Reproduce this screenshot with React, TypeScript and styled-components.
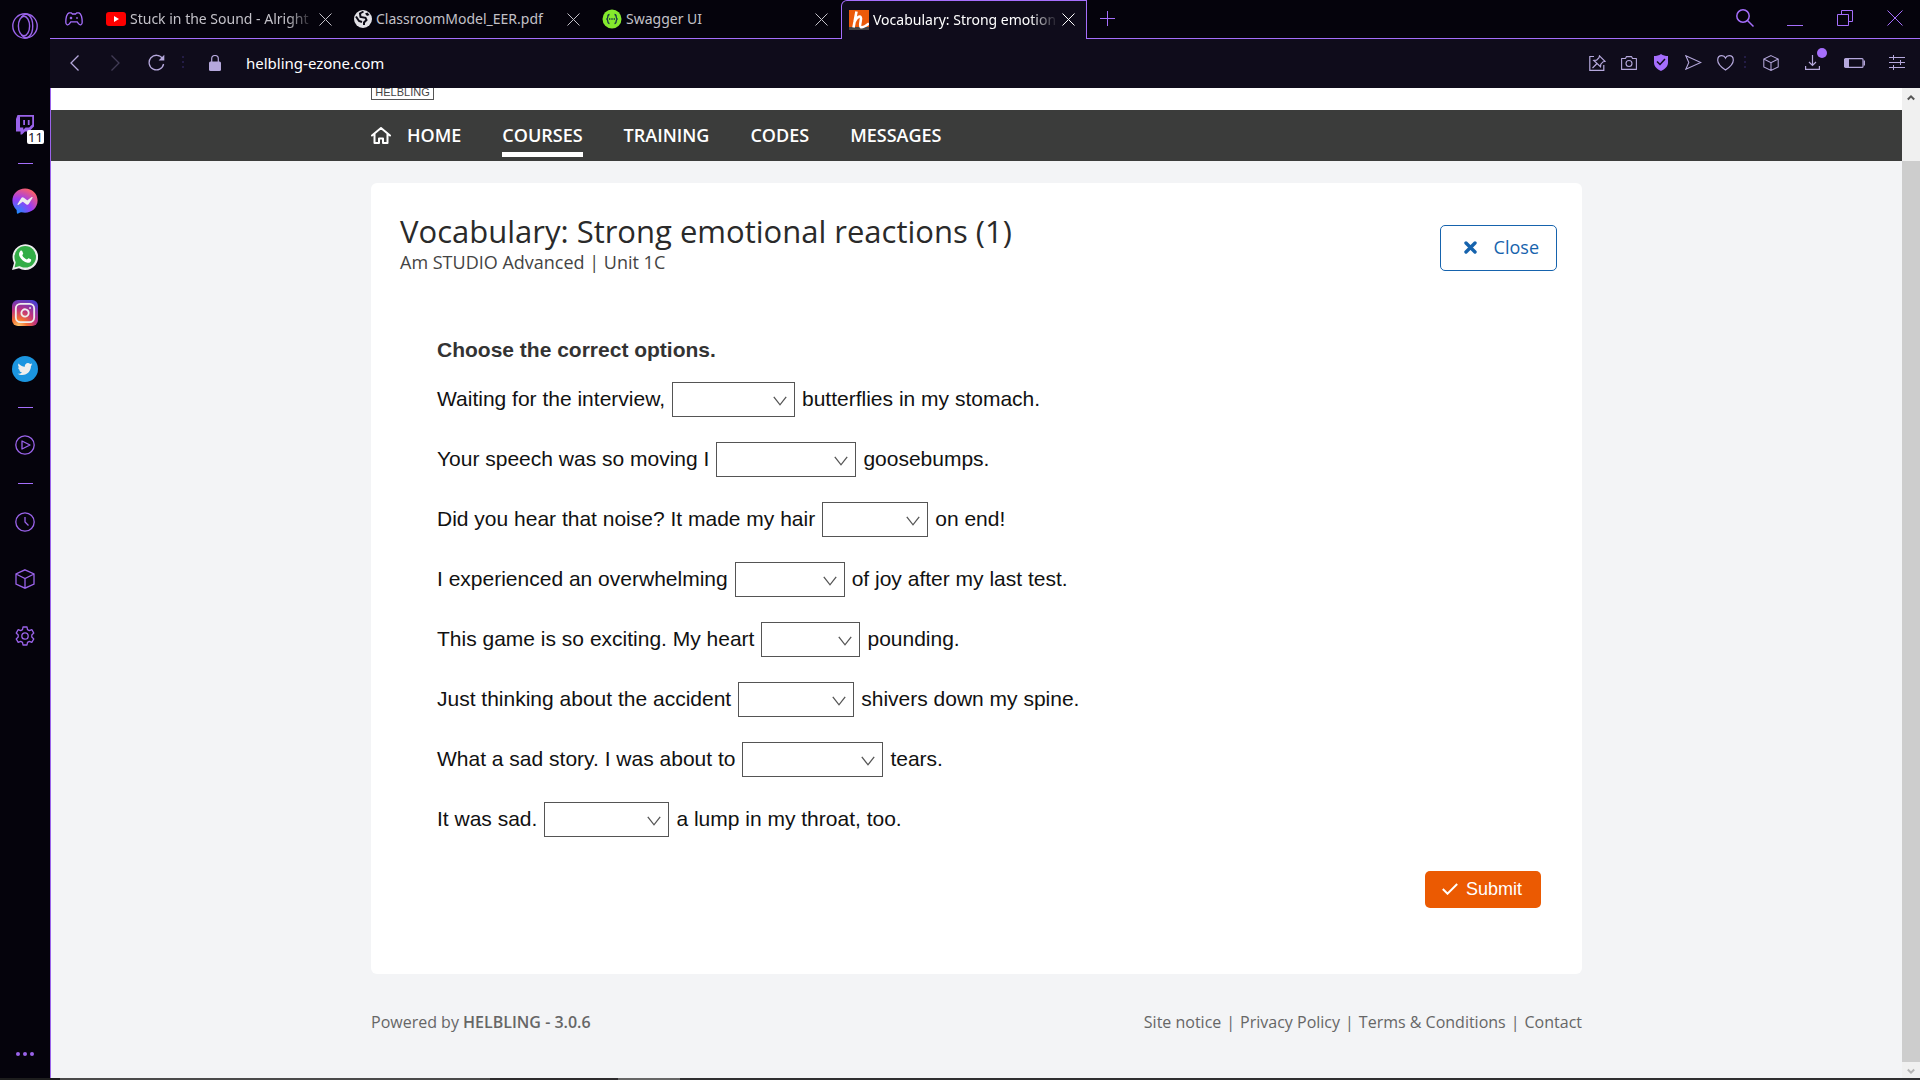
import React from "react";
import styled, { createGlobalStyle, css } from "styled-components";
import { FaFacebookMessenger, FaTwitter } from "react-icons/fa";
import { FiInstagram } from "react-icons/fi";

const colors = {
  chrome: "#05030c",
  toolbar: "#0f0c1b",
  accent: "#a56efc",
  accentDim: "#9a63ea",
  tool: "#b5a8dc",
  nav: "#3b3c3b",
  page: "#f3f4f6",
  blue: "#1663ad",
  orange: "#eb5a02",
};

const uiFont = `"Noto Sans", "Open Sans", sans-serif`;
const siteFont = `"Open Sans", "Noto Sans", sans-serif`;
const exerciseFont = `"Liberation Sans", Arial, sans-serif`;

const GlobalStyle = createGlobalStyle`
  *, *::before, *::after { box-sizing: border-box; }
  body { margin: 0; background: ${colors.chrome}; font-family: ${siteFont}; }
  button { margin: 0; padding: 0; border: 0; background: none; font: inherit; color: inherit; cursor: pointer; }
  a { color: inherit; text-decoration: none; }
  svg { display: block; flex: none; }
  h1, h2, p, ul { margin: 0; padding: 0; font-weight: inherit; }
`;

const Window = styled.div`
  display: flex;
  flex-direction: column;
  height: 100vh;
  overflow: hidden;
`;

const Browser = styled.div`
  display: flex;
  flex: 1;
  min-height: 0;
`;

const Sidebar = styled.nav`
  display: flex;
  flex-direction: column;
  flex: none;
  width: 50px;
  background: ${colors.chrome};
  color: ${colors.accentDim};
`;

const SideButton = styled.button<{ $height?: number }>`
  display: flex;
  align-items: center;
  justify-content: center;
  position: relative;
  height: ${(p) => p.$height ?? 56}px;
`;

const SideGap = styled.div`
  height: 46px;
`;

const SideDivider = styled.div`
  display: flex;
  align-items: center;
  justify-content: center;
  height: 20px;
  &::before {
    content: "";
    width: 15px;
    height: 1px;
    background: ${colors.accent};
  }
`;

const SideSpacer = styled.div`
  flex: 1;
`;

const CountBadge = styled.span`
  position: absolute;
  left: 27px;
  top: 33px;
  width: 17px;
  height: 14px;
  border-radius: 2px;
  background: #fff;
  color: #14101f;
  font: 13px/14px ${uiFont};
  text-align: center;
`;

const Main = styled.div`
  display: flex;
  flex-direction: column;
  flex: 1;
  min-width: 0;
`;

const TabStrip = styled.div`
  display: flex;
  height: 39px;
  background: ${colors.chrome};
  color: ${colors.accent};
`;

const StripLine = css`
  border-bottom: 1px solid ${colors.accent};
`;

const GxCorner = styled.button`
  ${StripLine}
  width: 47px;
  display: flex;
  align-items: center;
  justify-content: center;
`;

const Tab = styled.div<{ $active?: boolean }>`
  display: flex;
  align-items: center;
  gap: 4px;
  ${(p) =>
    p.$active
      ? css`
          width: 246px;
          padding: 0 11px 1px 7px;
          border: 1px solid ${colors.accent};
          border-bottom: 0;
          border-radius: 6px 0 0 0;
          background: ${colors.toolbar};
          color: #fff;
        `
      : css`
          ${StripLine}
          width: 248px;
          padding: 0 13px 0 9px;
          color: #c3c1c8;
        `}
`;

const TabTitle = styled.span<{ $fade?: boolean }>`
  flex: 1;
  min-width: 0;
  overflow: hidden;
  white-space: nowrap;
  font: 14px/20px ${uiFont};
  ${(p) =>
    p.$fade &&
    css`
      mask-image: linear-gradient(to right, #000 85%, transparent);
    `}
`;

const TabClose = styled.button`
  display: flex;
  align-items: center;
  justify-content: center;
  width: 13px;
  height: 13px;
`;

const StripRest = styled.div`
  ${StripLine}
  display: flex;
  align-items: center;
  flex: 1;
  padding: 0 16px 2px 11px;
`;

const WindowControls = styled.div`
  display: flex;
  align-items: center;
  gap: 32px;
  margin-left: auto;
`;

const Toolbar = styled.div`
  display: flex;
  align-items: center;
  height: 49px;
  padding: 0 14px 2px 15px;
  background: ${colors.toolbar};
  color: ${colors.tool};
`;

const ToolGroup = styled.div<{ $gap: number }>`
  display: flex;
  align-items: center;
  gap: ${(p) => p.$gap}px;
`;

const ToolButton = styled.button<{ $dim?: boolean }>`
  display: flex;
  align-items: center;
  justify-content: center;
  min-width: 18px;
  height: 18px;
  position: relative;
  opacity: ${(p) => (p.$dim ? 0.3 : 1)};
`;

const Dots = styled.span<{ $before: number; $after: number }>`
  width: 2px;
  height: 14px;
  margin: 0 ${(p) => p.$after}px 0 ${(p) => p.$before}px;
  background: repeating-linear-gradient(#231c46 0 2px, transparent 2px 5px);
`;

const AddressInput = styled.input`
  flex: 1;
  min-width: 0;
  margin-left: 22px;
  padding: 0;
  border: 0;
  outline: 0;
  background: transparent;
  color: #fff;
  font: 15px/20px ${uiFont};
`;

const DownloadDot = styled.span`
  position: absolute;
  top: -6px;
  right: -6px;
  width: 10px;
  height: 10px;
  border-radius: 50%;
  background: ${colors.accent};
`;

const ViewportFrame = styled.div`
  display: flex;
  flex: 1;
  min-height: 0;
  border-left: 1px solid ${colors.accentDim};
`;

const Page = styled.div`
  flex: 1;
  min-width: 0;
  overflow: hidden;
  background: ${colors.page};
`;

const Scrollbar = styled.div`
  display: flex;
  flex-direction: column;
  align-items: center;
  width: 18px;
  background: #f0f0f0;
`;

const ScrollArrow = styled.div<{ $height: number; $end?: boolean }>`
  display: flex;
  justify-content: center;
  padding-top: 6px;
  height: ${(p) => p.$height}px;
  color: ${(p) => (p.$end ? "#b4b4b4" : "#555")};
`;

const ScrollThumb = styled.div`
  flex: 1;
  width: 100%;
  background: #cdcdcd;
`;

const Container = styled.div`
  width: 100%;
  max-width: 1211px;
  margin: 0 auto;
`;

const LogoBar = styled.header`
  height: 22px;
  overflow: hidden;
  background: #fff;
`;

const LogoRow = styled(Container)`
  display: flex;
  align-items: flex-end;
  height: 100%;
  padding-bottom: 10px;
`;

const Logo = styled.a`
  flex: none;
  width: 63px;
  height: 40px;
  padding-top: 25px;
  border: 1px solid #555;
  color: #444;
  font: 11px/12px ${exerciseFont};
  text-align: center;
`;

const NavBar = styled.nav`
  background: ${colors.nav};
`;

const NavRow = styled(Container)`
  display: flex;
  gap: 41px;
  height: 51px;
`;

const NavLink = styled.a<{ $active?: boolean }>`
  display: flex;
  align-items: center;
  gap: 16px;
  height: 47px;
  padding-top: 8px;
  border-bottom: 5px solid ${(p) => (p.$active ? "#fff" : "transparent")};
  color: #fff;
  font: 600 18px/24px ${siteFont};
`;

const Card = styled.main`
  margin-top: 22px;
  padding: 30px 25px 66px 29px;
  border-radius: 6px;
  background: #fff;
`;

const CardHeader = styled.div`
  display: flex;
  justify-content: space-between;
  align-items: flex-start;
`;

const Title = styled.h1`
  color: #2a2a2a;
  font: 400 31px/36px ${siteFont};
`;

const Subtitle = styled.p`
  color: #444;
  font: 400 18px/26px ${siteFont};
`;

const CloseButton = styled.button`
  display: flex;
  align-items: center;
  gap: 17px;
  height: 46px;
  margin-top: 12px;
  padding: 0 17px 2px 23px;
  border: 1px solid ${colors.blue};
  border-radius: 5px;
  color: ${colors.blue};
  font: 500 18px/24px ${siteFont};
`;

const Exercise = styled.form`
  padding: 63px 16px 0 37px;
  font-family: ${exerciseFont};
`;

const Instruction = styled.h2`
  padding-bottom: 7px;
  color: #333;
  font: bold 21px/24px ${exerciseFont};
`;

const Sentence = styled.label`
  display: flex;
  align-items: center;
  gap: 7px;
  min-height: 60px;
  color: #111;
  font-size: 21px;
  line-height: 24px;
`;

const GapField = styled.span`
  display: grid;
  align-items: center;
`;

const GapSelect = styled.select<{ $width: number }>`
  grid-area: 1 / 1;
  appearance: none;
  width: ${(p) => p.$width}px;
  height: 35px;
  margin: 0;
  border: 1px solid #555;
  border-radius: 0;
  background: #fff;
  font: 21px ${exerciseFont};
`;

const GapChevron = styled.svg`
  grid-area: 1 / 1;
  justify-self: end;
  margin: 3px 8px 0 0;
  pointer-events: none;
`;

const Actions = styled.div`
  display: flex;
  justify-content: flex-end;
  padding-top: 22px;
`;

const SubmitButton = styled.button`
  display: flex;
  align-items: center;
  gap: 8px;
  height: 37px;
  padding: 0 19px 2px 17px;
  border-radius: 5px;
  background: ${colors.orange};
  color: #fff;
  font: 18px/24px ${exerciseFont};
`;

const Footer = styled.footer`
  display: flex;
  justify-content: space-between;
  padding-top: 36px;
  color: #666;
  font: 16px/24px ${siteFont};

  strong {
    font-weight: 600;
  }
`;

const FooterLinks = styled.div`
  display: flex;
  gap: 5px;
`;

const Taskbar = styled.div`
  height: 2px;
  background: linear-gradient(to right, #1d1d1d 60px, #4a4a4a 60px 490px, #2d2b2d 490px 618px, #666 618px 680px, #2f2f31 680px);
`;

const Cross = ({ size, width = 1 }: { size: number; width?: number }) => (
  <svg width={size} height={size} viewBox={`0 0 ${size} ${size}`} fill="none" stroke="currentColor" strokeWidth={width}>
    <path d={`M.5.5 ${size - 0.5} ${size - 0.5}M${size - 0.5}.5.5 ${size - 0.5}`} />
  </svg>
);

const Cube = ({ size }: { size: number }) => (
  <svg width={size} height={size} viewBox="0 0 20 20" fill="none" stroke="currentColor" strokeWidth="1.3">
    <path d="M10 .8 19 5v10l-9 4.2L1 15V5zM1 5l9 4.6L19 5M10 9.6v9.6" />
  </svg>
);

const OperaMark = () => (
  <svg width="26" height="26" viewBox="0 0 26 26" fill="none" stroke="currentColor" strokeWidth="1.4">
    <ellipse cx="13" cy="13" rx="12.2" ry="12.2" />
    <ellipse cx="12" cy="13" rx="5.6" ry="9.8" />
    <path d="M9.5 4C12 1 15 .8 17 2.400c5 4 5 17.200 0 21.200-2 1.600-5 1.400-7.500-1.600" />
  </svg>
);

const Twitch = () => (
  <svg width="18" height="20" viewBox="0 0 18 20">
    <path fill="currentColor" fillRule="evenodd" d="M1.5 0H18v11.5L13 16.5H9L6 19.5H4.5v-3H0V4zM4 1.8v10.7h3.3v2.2l2.2-2.2h3.6l3.1-3.1V1.8z" />
    <path fill="currentColor" d="M7.2 5H9v5H7.2zM11.8 5h1.8v5h-1.8z" />
  </svg>
);

const Messenger = () => (
  <svg width="26" height="26" viewBox="0 0 26 26">
    <defs>
      <radialGradient id="msg" gradientUnits="userSpaceOnUse" cx="100" cy="512" r="540">
        <stop offset="0" stopColor="#1292ff" />
        <stop offset=".55" stopColor="#9a3cf5" />
        <stop offset="1" stopColor="#fb5f6c" />
      </radialGradient>
    </defs>
    <circle cx="13" cy="12.5" r="9" fill="#eee" />
    <FaFacebookMessenger x="0" y="0" size={26} fill="url(#msg)" />
  </svg>
);

const WhatsApp = () => (
  <svg width="26" height="26" viewBox="0 0 26 26">
    <path d="M0 26 2 19A12.8 12.8 0 1 1 7 24.2z" fill="#eee" />
    <circle cx="13.2" cy="12.8" r="10.8" fill="#33ad46" />
    <path d="M2.5 23.5 4 17l4 5z" fill="#33ad46" />
    <path d="M8.3 7c.8-.8 1.7-.5 2 .2l.9 2.2c.2.5-.9 1.5-.9 1.9.8 2 2.600 3.500 4.500 4.200.5.1 1.300-1.500 1.800-1.300l2.300 1.100c.6.4.3 2.200-.8 2.900-1.200.8-2.700.8-5.400-.5-2.800-1.400-5-4.300-5.500-6.200-.4-1.800.2-3.500 1.100-4.500z" fill="#fff" />
  </svg>
);

const Instagram = () => (
  <svg width="26" height="26" viewBox="0 0 26 26">
    <defs>
      <radialGradient id="insta" cx=".25" cy="1.05" r="1.15">
        <stop offset="0" stopColor="#fed576" />
        <stop offset=".28" stopColor="#f47133" />
        <stop offset=".6" stopColor="#bc3081" />
        <stop offset="1" stopColor="#4c3fcf" />
      </radialGradient>
    </defs>
    <rect width="26" height="26" rx="6" fill="url(#insta)" />
    <FiInstagram x="2" y="2" size={22} color="#eee" />
  </svg>
);

const Twitter = () => (
  <svg width="26" height="26" viewBox="0 0 26 26">
    <circle cx="13" cy="13" r="13" fill="#1b95e0" />
    <FaTwitter x="5.5" y="5.5" size={15} color="#eee" />
  </svg>
);

const Play = () => (
  <svg width="20" height="20" viewBox="0 0 20 20" fill="none" stroke="currentColor" strokeWidth="1.3">
    <circle cx="10" cy="10" r="9.2" />
    <path d="M7 6v8l8-4z" strokeLinejoin="round" />
  </svg>
);

const Clock = () => (
  <svg width="20" height="20" viewBox="0 0 20 20" fill="none" stroke="currentColor" strokeWidth="1.3">
    <circle cx="10" cy="10" r="9.2" />
    <path d="M10 5v5l3.5 3.5" />
  </svg>
);

const Gear = () => (
  <svg width="20" height="20" viewBox="0 0 20 20" fill="none" stroke="currentColor" strokeWidth="1.3" strokeLinejoin="round">
    <path d="M8 1h4l.5 2.6 1.8 1 2.5-.9 2 3.4-2 1.8v2.2l2 1.8-2 3.4-2.5-.9-1.8 1L12 19H8l-.5-2.6-1.8-1-2.5.9-2-3.4 2-1.8V8.900l-2-1.800 2-3.400 2.500.9 1.800-1z" />
    <circle cx="10" cy="10" r="3.2" />
  </svg>
);

const Ellipsis = () => (
  <svg width="18" height="4" viewBox="0 0 18 4" fill="currentColor">
    <circle cx="2" cy="2" r="2" />
    <circle cx="9" cy="2" r="2" />
    <circle cx="16" cy="2" r="2" />
  </svg>
);

const Gamepad = () => (
  <svg width="18" height="14" viewBox="0 0 18 14" fill="none" stroke="currentColor" strokeWidth="1.3">
    <path d="M4 .8h2.2L7.5 2h3L11.8.8H14c2 1 3.2 5 3.2 9.5 0 3.2-2.4 3.2-3.7 1.4l-1.3-1.9H5.8l-1.3 1.9C3.2 13.5.8 13.5.8 10.3.8 5.8 2 1.8 4 .8z" />
    <path d="M4.8 6h2.4M6 4.8v2.4M11.2 6h1.6" />
  </svg>
);

const YouTube = () => (
  <svg width="20" height="14" viewBox="0 0 20 14">
    <rect width="20" height="14" rx="3" fill="#f00" />
    <path d="M8 4v6l5-3z" fill="#fff" />
  </svg>
);

const Globe = () => (
  <svg width="18" height="18" viewBox="0 0 18 18">
    <circle cx="9" cy="9" r="9" fill="#e2e1e6" />
    <path d="M9.5 1.5 6 3.5 6.5 7l5 .8 1 2.2-2.5 2.5v2.5M2 6.5 5 11l3 1" fill="none" stroke="#0b0914" strokeWidth="2" />
    <path d="m11 3.5 2.5-1 2 2.5-2.5 1z" fill="#0b0914" />
  </svg>
);

const Swagger = () => (
  <svg width="20" height="20" viewBox="0 0 20 20">
    <circle cx="10" cy="10" r="9.5" fill="#85ea2d" />
    <path d="M7.5 5.5c-3 0-.5 4-3 4.5 2.5.5 0 4.5 3 4.5M12.5 5.5c3 0 .5 4 3 4.5-2.5.5 0 4.5-3 4.5" fill="none" stroke="#173647" strokeWidth="1.3" />
    <path d="M7 10h1.400M9.300 10h1.400M11.600 10H13" stroke="#173647" strokeWidth="1.5" />
  </svg>
);

const HelblingIcon = () => (
  <svg width="20" height="20" viewBox="0 0 20 20">
    <path d="M0 0h20v17H0z" fill="#eb5a0a" />
    <path d="M0 17h20v3H0z" fill="#444" />
    <path d="M7.5 1.5 4.5 17.5M5.5 12c2-5 6.5-7.5 6.5-3.5 0 2.5-1.8 7.5-.3 8.500 1.800 1 4.300-.5 8.300-3.500" fill="none" stroke="#fff" strokeWidth="2.6" />
  </svg>
);

const Plus = () => (
  <svg width="15" height="15" viewBox="0 0 15 15" stroke="currentColor">
    <path d="M7.5 0v15M0 7.5h15" />
  </svg>
);

const SearchGlyph = () => (
  <svg width="18" height="18" viewBox="0 0 18 18" fill="none" stroke="currentColor" strokeWidth="1.5">
    <circle cx="7" cy="7" r="6.2" />
    <path d="m11.5 11.5 6 6" />
  </svg>
);

const Minimise = () => (
  <svg width="16" height="16" viewBox="0 0 16 16" stroke="currentColor">
    <path d="M0 15.5h16" />
  </svg>
);

const Restore = () => (
  <svg width="16" height="16" viewBox="0 0 16 16" fill="none" stroke="currentColor">
    <path d="M.5 4.5h11v11H.5zM4.5 4.5v-4h11v11h-4" />
  </svg>
);

const Back = ({ flip }: { flip?: boolean }) => (
  <svg width="9" height="16" viewBox="0 0 9 16" fill="none" stroke="currentColor" strokeWidth="1.3">
    <path d={flip ? "m.5.5 7.5 7.5-7.5 7.5" : "M8.5.5 1 8l7.5 7.5"} />
  </svg>
);

const Reload = () => (
  <svg width="17" height="17" viewBox="0 0 17 17" fill="none" stroke="currentColor" strokeWidth="1.3">
    <path d="M14.5 4.5A7.3 7.3 0 1 0 15.6 10" />
    <path d="M16.3.8v5.700h-5.700z" fill="currentColor" stroke="none" />
  </svg>
);

const Lock = () => (
  <svg width="12" height="16" viewBox="0 0 12 16">
    <path d="M2.7 7V3.8a3.3 3.3 0 0 1 6.600 0V7" fill="none" stroke="currentColor" strokeWidth="1.2" />
    <rect y="6.5" width="12" height="9.5" rx="1.5" fill="currentColor" />
  </svg>
);

const PinEdit = () => (
  <svg width="17" height="16" viewBox="0 0 17 16" fill="none" stroke="currentColor" strokeWidth="1.2">
    <path d="M5 1.5H.8v13.800h14V10" />
    <path d="m10.5.8 5.500 5.500-1.800.4-2.400 2.500-.3 2.600L4.800 5.500l2.800-.3L10 2.700zM8 8.500l-4.500 4.500" />
  </svg>
);

const Camera = () => (
  <svg width="16" height="14" viewBox="0 0 16 14" fill="none" stroke="currentColor" strokeWidth="1.1">
    <path d="M.6 2.5h3.900l1-1.900h5l1 1.900h3.900v10.900H.6z" strokeLinejoin="round" />
    <circle cx="8" cy="7.5" r="3" />
  </svg>
);

const Shield = () => (
  <svg width="14" height="17" viewBox="0 0 14 17">
    <path d="M7 0c2 1.400 4.500 2 7 2v6.500c0 4-3 6.500-7 8.500-4-2-7-4.500-7-8.500V2c2.500 0 5-.6 7-2z" fill={colors.accent} />
    <path d="m3 7.5 3 3 5-5.500" fill="none" stroke={colors.toolbar} strokeWidth="1.5" />
  </svg>
);

const Send = () => (
  <svg width="17" height="15" viewBox="0 0 17 15" fill="none" stroke="currentColor" strokeWidth="1.1">
    <path d="m.8.8 15 6.700-15 6.700 3-6.700z" />
  </svg>
);

const Heart = () => (
  <svg width="17" height="16" viewBox="0 0 17 16" fill="none" stroke="currentColor" strokeWidth="1.2">
    <path d="M8.5 15C4 12 .7 9 .7 5.200.7 2.500 2.500.7 4.800.7c1.700 0 3 .8 3.700 2.300C9.200 1.500 10.500.7 12.200.7c2.300 0 4.100 1.800 4.100 4.500C16.300 9 13 12 8.500 15z" />
  </svg>
);

const Download = () => (
  <svg width="15" height="15" viewBox="0 0 15 15" fill="none" stroke="currentColor" strokeWidth="1.2">
    <path d="M7.5 0v10.500M4 7l3.500 3.500L11 7M.6 11v3.400h13.800V11" />
  </svg>
);

const Battery = () => (
  <svg width="21" height="10" viewBox="0 0 21 10" fill="none" stroke="currentColor" strokeWidth="1.2">
    <rect x=".6" y=".6" width="18.4" height="8.8" rx="1" />
    <path d="M20.3 2.5v5" strokeWidth="1.4" />
    <path d="M0 1h5v8H0z" fill="currentColor" stroke="none" />
  </svg>
);

const Sliders = () => (
  <svg width="16" height="15" viewBox="0 0 16 15" fill="none" stroke="currentColor">
    <path d="M0 2.5h16M0 7.5h16M0 12.5h16M4.5 0v5M11.5 5v5M4.5 10v5" />
  </svg>
);

const Caret = ({ down }: { down?: boolean }) => (
  <svg width="8" height="7" viewBox="0 0 8 7" fill="none" stroke="currentColor" strokeWidth="2">
    <path d={down ? "m.8 1.5 3.2 3.2 3.2-3.2" : "M.8 5.5 4 2.3l3.2 3.2"} />
  </svg>
);

const House = () => (
  <svg width="20" height="17" viewBox="0 0 20 17" fill="none" stroke="currentColor" strokeWidth="2" strokeLinejoin="round">
    <path d="M1 8.5 10 1l9 7.500M3.500 7v9H8v-4.500h4V16h4.500V7" strokeLinecap="round" />
  </svg>
);

const HeavyCross = () => (
  <svg width="13" height="13" viewBox="0 0 13 13" stroke="currentColor" strokeWidth="3.4" strokeLinecap="round">
    <path d="m2 2 9 9M11 2l-9 9" />
  </svg>
);

const Check = () => (
  <svg width="16" height="12" viewBox="0 0 16 12" fill="none" stroke="currentColor" strokeWidth="2">
    <path d="m.8 6 4.700 4.700L15.200 1" />
  </svg>
);

const sentences = [
  { before: "Waiting for the interview,", width: 123, after: "butterflies in my stomach." },
  { before: "Your speech was so moving I", width: 140, after: "goosebumps." },
  { before: "Did you hear that noise? It made my hair", width: 106, after: "on end!" },
  { before: "I experienced an overwhelming", width: 110, after: "of joy after my last test." },
  { before: "This game is so exciting. My heart", width: 99, after: "pounding." },
  { before: "Just thinking about the accident", width: 116, after: "shivers down my spine." },
  { before: "What a sad story. I was about to", width: 141, after: "tears." },
  { before: "It was sad.", width: 125, after: "a lump in my throat, too." },
];

const tabs = [
  { icon: <YouTube />, title: "Stuck in the Sound - Alright", fade: true },
  { icon: <Globe />, title: "ClassroomModel_EER.pdf" },
  { icon: <Swagger />, title: "Swagger UI" },
  { icon: <HelblingIcon />, title: "Vocabulary: Strong emotion", fade: true, active: true },
];

const navItems = ["COURSES", "TRAINING", "CODES", "MESSAGES"];
const footerItems = ["Site notice", "Privacy Policy", "Terms & Conditions", "Contact"];

export default function App() {
  return (
    <Window>
      <GlobalStyle />
      <Browser>
        <Sidebar>
          <SideButton $height={51}><OperaMark /></SideButton>
          <SideGap />
          <SideButton><Twitch /><CountBadge>11</CountBadge></SideButton>
          <SideDivider />
          <SideButton><Messenger /></SideButton>
          <SideButton><WhatsApp /></SideButton>
          <SideButton><Instagram /></SideButton>
          <SideButton><Twitter /></SideButton>
          <SideDivider />
          <SideButton><Play /></SideButton>
          <SideDivider />
          <SideButton $height={57}><Clock /></SideButton>
          <SideButton $height={57}><Cube size={20} /></SideButton>
          <SideButton $height={57}><Gear /></SideButton>
          <SideSpacer />
          <SideButton $height={48}><Ellipsis /></SideButton>
        </Sidebar>
        <Main>
          <TabStrip>
            <GxCorner><Gamepad /></GxCorner>
            {tabs.map((tab) => (
              <Tab key={tab.title} $active={tab.active}>
                {tab.icon}
                <TabTitle $fade={tab.fade}>{tab.title}</TabTitle>
                <TabClose><Cross size={13} /></TabClose>
              </Tab>
            ))}
            <StripRest>
              <ToolButton><Plus /></ToolButton>
              <WindowControls>
                <ToolButton><SearchGlyph /></ToolButton>
                <ToolButton><Minimise /></ToolButton>
                <ToolButton><Restore /></ToolButton>
                <ToolButton><Cross size={16} /></ToolButton>
              </WindowControls>
            </StripRest>
          </TabStrip>
          <Toolbar>
            <ToolGroup $gap={23}>
              <ToolButton><Back /></ToolButton>
              <ToolButton $dim><Back flip /></ToolButton>
              <ToolButton><Reload /></ToolButton>
            </ToolGroup>
            <Dots $before={17} $after={22} />
            <ToolButton><Lock /></ToolButton>
            <AddressInput aria-label="Address" defaultValue="helbling-ezone.com" />
            <ToolGroup $gap={14}>
              <ToolButton><PinEdit /></ToolButton>
              <ToolButton><Camera /></ToolButton>
              <ToolButton><Shield /></ToolButton>
              <ToolButton><Send /></ToolButton>
              <ToolButton><Heart /></ToolButton>
            </ToolGroup>
            <Dots $before={10} $after={16} />
            <ToolGroup $gap={23}>
              <ToolButton><Cube size={16} /></ToolButton>
              <ToolButton><Download /><DownloadDot /></ToolButton>
              <ToolButton><Battery /></ToolButton>
              <ToolButton><Sliders /></ToolButton>
            </ToolGroup>
          </Toolbar>
          <ViewportFrame>
            <Page>
              <LogoBar>
                <LogoRow><Logo href="#">HELBLING</Logo></LogoRow>
              </LogoBar>
              <NavBar>
                <NavRow>
                  <NavLink href="#"><House />HOME</NavLink>
                  {navItems.map((item) => (
                    <NavLink key={item} href="#" $active={item === "COURSES"}>{item}</NavLink>
                  ))}
                </NavRow>
              </NavBar>
              <Container>
                <Card>
                  <CardHeader>
                    <div>
                      <Title>Vocabulary: Strong emotional reactions (1)</Title>
                      <Subtitle>Am STUDIO Advanced | Unit 1C</Subtitle>
                    </div>
                    <CloseButton><HeavyCross />Close</CloseButton>
                  </CardHeader>
                  <Exercise onSubmit={(e) => e.preventDefault()}>
                    <Instruction>Choose the correct options.</Instruction>
                    {sentences.map((s) => (
                      <Sentence key={s.before}>
                        {s.before}
                        <GapField>
                          <GapSelect $width={s.width} defaultValue="">
                            <option value="" />
                          </GapSelect>
                          <GapChevron width="14" height="10" viewBox="0 0 14 10" fill="none" stroke="#555" strokeWidth="1.3">
                            <path d="M.8.8 7 8.800 13.200.8" />
                          </GapChevron>
                        </GapField>
                        {s.after}
                      </Sentence>
                    ))}
                    <Actions>
                      <SubmitButton type="submit"><Check />Submit</SubmitButton>
                    </Actions>
                  </Exercise>
                </Card>
                <Footer>
                  <div>Powered by <strong>HELBLING - 3.0.6</strong></div>
                  <FooterLinks>
                    {footerItems.map((item, i) => (
                      <React.Fragment key={item}>
                        {i > 0 && <span>|</span>}
                        <a href="#">{item}</a>
                      </React.Fragment>
                    ))}
                  </FooterLinks>
                </Footer>
              </Container>
            </Page>
            <Scrollbar>
              <ScrollArrow $height={73}><Caret /></ScrollArrow>
              <ScrollThumb />
              <ScrollArrow $height={16} $end><Caret down /></ScrollArrow>
            </Scrollbar>
          </ViewportFrame>
        </Main>
      </Browser>
      <Taskbar />
    </Window>
  );
}
